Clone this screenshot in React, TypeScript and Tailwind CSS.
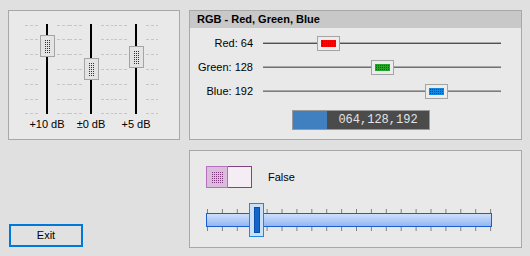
import React from 'react'

const Grip = ({ cols, rows, color }: { cols: number; rows: number; color: string }) => (
  <svg width={cols * 2 - 1} height={rows * 2 - 1}>
    {Array.from({ length: rows }).flatMap((_, r) =>
      Array.from({ length: cols }).map((__, c) => (
        <rect key={`${r}-${c}`} x={c * 2} y={r * 2} width={1} height={1} fill={color} />
      ))
    )}
  </svg>
)

const gridRows = [1, 15, 30, 45, 60, 75, 89]

function VSlider({ label, top }: { label: string; top: number }) {
  return (
    <div className="w-[44px] flex flex-col items-center">
      <div className="relative w-[44px] h-[90px]">
        <svg className="absolute inset-0" width={44} height={90}>
          {gridRows.map((y) => (
            <g key={y}>
              <line x1={0} y1={y + 0.5} x2={13} y2={y + 0.5} stroke="#c6c6c6" strokeDasharray="3 2" />
              <line x1={32} y1={y + 0.5} x2={44} y2={y + 0.5} stroke="#c6c6c6" strokeDasharray="3 2" />
            </g>
          ))}
        </svg>
        <div className="absolute left-[21px] top-0 w-[2px] h-full bg-black" />
        <div
          className="absolute left-[15px] w-[15px] h-[22px] border border-[#a4a4a4] bg-[#e4e4e4] flex items-center justify-center"
          style={{ top }}
        >
          <Grip cols={3} rows={7} color="#333" />
        </div>
      </div>
      <div className="mt-[4px] leading-[13px] whitespace-nowrap">{label}</div>
    </div>
  )
}

const rgbRows = [
  { label: 'Red: 64', value: 64, line: '#e81010', fill: '#ff0000', dot: '#b00000' },
  { label: 'Green: 128', value: 128, line: '#2ea02e', fill: '#28a428', dot: '#146414' },
  { label: 'Blue: 192', value: 192, line: '#3090d8', fill: '#1488e0', dot: '#0a4f90' },
]

function ColorSlider({ value, line, fill, dot }: { value: number; line: string; fill: string; dot: string }) {
  const left = Math.round((value / 255) * 215)
  return (
    <div className="relative w-[238px] h-[15px]">
      <div className="absolute left-0 right-0 top-[6px] h-[1px] bg-[#a8a8a8]" />
      <div className="absolute left-0 right-0 top-[7px] h-[1px]" style={{ background: line }} />
      <div
        className="absolute top-0 w-[23px] h-[15px] border border-[#a4a4a4] bg-[#ececec] flex items-center justify-center"
        style={{ left }}
      >
        <div className="w-[15px] h-[7px] flex items-center justify-center" style={{ background: fill }}>
          <Grip cols={7} rows={3} color={dot} />
        </div>
      </div>
    </div>
  )
}

export default function App() {
  const ticks = Array.from({ length: 20 }, (_, i) => 1 + i * 14.9)
  return (
    <div className="w-[530px] h-[256px] bg-[#e0e0e0] flex pl-[8px] pt-[10px] font-['Liberation_Sans',Arial,sans-serif] text-[11px] text-black overflow-hidden">
      <div className="w-[172px] flex flex-col">
        <div className="h-[130px] border border-[#a8a8a8] bg-[#e9e9e9] pt-[13px] pl-[16px] flex">
          <VSlider label="+10 dB" top={11} />
          <VSlider label="±0 dB" top={34} />
          <div className="ml-[1px]">
            <VSlider label="+5 dB" top={22} />
          </div>
        </div>
        <button className="mt-[84px] ml-[1px] w-[74px] h-[23px] border-2 border-[#0078d7] bg-[#e1e1e1] text-[11px] leading-none">
          Exit
        </button>
      </div>

      <div className="ml-[9px] w-[333px] flex flex-col">
        <div className="h-[130px] border border-[#a8a8a8] bg-[#e9e9e9] flex flex-col">
          <div className="h-[17px] bg-[#c8c8c8] pl-[7px] font-bold leading-[17px]">RGB - Red, Green, Blue</div>
          <div className="mt-[3px] flex flex-col">
            {rgbRows.map((r) => (
              <div key={r.label} className="h-[24px] flex items-center">
                <div className="w-[63px] text-right whitespace-nowrap">{r.label}</div>
                <div className="ml-[10px]">
                  <ColorSlider value={r.value} line={r.line} fill={r.fill} dot={r.dot} />
                </div>
              </div>
            ))}
          </div>
          <div className="mt-[7px] ml-[102px] w-[138px] h-[20px] border border-[#9a9a9a] flex">
            <div className="w-[34px] bg-[#4080c0]" />
            <div className="flex-1 bg-[#4b4b4b] text-[#e4e4e4] font-['Liberation_Mono',monospace] text-[12px] leading-[18px] text-center">
              064,128,192
            </div>
          </div>
        </div>

        <div className="mt-[10px] h-[98px] border border-[#a8a8a8] bg-[#e9e9e9] pt-[15px] pl-[16px] flex flex-col">
          <div className="flex items-center h-[22px]">
            <div className="w-[46px] h-[22px] flex">
              <div className="w-[22px] h-full border border-[#b470bc] bg-[#dcbcdc] flex items-center justify-center">
                <Grip cols={6} rows={6} color="#7a3a7a" />
              </div>
              <div className="flex-1 h-full border border-l-0 border-[#804480] bg-[#f4eef4]" />
            </div>
            <span className="ml-[16px]">False</span>
          </div>
          <div className="relative mt-[15px] w-[286px] h-[34px]">
            <svg className="absolute inset-0" width={286} height={34}>
              {ticks.map((x) => (
                <g key={x}>
                  <line x1={x + 0.5} y1={6} x2={x + 0.5} y2={10} stroke="#808080" />
                  <line x1={x + 0.5} y1={23} x2={x + 0.5} y2={28} stroke="#808080" />
                </g>
              ))}
            </svg>
            <div className="absolute left-0 right-0 top-[10px] h-[14px] border border-[#1a5fd0] bg-gradient-to-b from-[#cde0fc] to-[#94b6f0]" />
            <div className="absolute left-[43px] top-0 w-[15px] h-[34px] border border-[#1e88e5] bg-[#c8e0f8] flex justify-center pt-[3px]">
              <div className="w-[6px] h-[26px] border border-[#0a4ea8] bg-[#1466c8]" />
            </div>
          </div>
        </div>
      </div>
    </div>
  )
}
